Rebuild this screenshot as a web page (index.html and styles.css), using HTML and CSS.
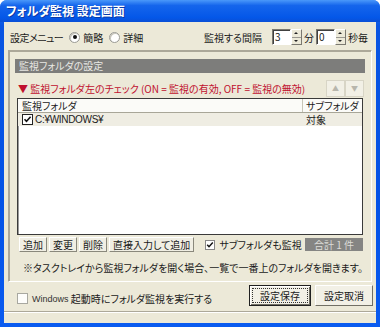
FILE: index.html
```html
<!DOCTYPE html>
<html lang="ja">
<head>
<meta charset="utf-8">
<title>フォルダ監視 設定画面</title>
<link rel="stylesheet" href="styles.css">
</head>
<body>
<div class="window">
    <div class="titlebar">フォルダ監視 設定画面</div>
    <div class="client">
        <div class="toprow">
            <div class="menu">
                <span>設定メニュー</span>
                <span class="radio on"></span><span>簡略</span>
                <span class="radio"></span><span>詳細</span>
            </div>
            <div class="interval">
                <span>監視する間隔</span>
                <span class="spin"><span class="field">3</span><span class="spinbtn"><i class="up"></i><i class="down"></i></span></span>
                <span>分</span>
                <span class="spin"><span class="field">0</span><span class="spinbtn"><i class="up"></i><i class="down"></i></span></span>
                <span>秒毎</span>
            </div>
        </div>

        <div class="panel">
            <div class="heading">監視フォルダの設定</div>
            <div class="hintrow">
                <span class="hint">▼ 監視フォルダ左のチェック (ON = 監視の有効, OFF = 監視の無効)</span>
                <span class="arrows"><span class="arrow">▲</span><span class="arrow">▼</span></span>
            </div>
            <div class="list">
                <div class="list-head">
                    <span class="col-name">監視フォルダ</span>
                    <span class="col-sub">サブフォルダ</span>
                </div>
                <div class="list-row">
                    <span class="col-name">
                        <svg class="tick" width="11" height="11" viewBox="0 0 11 11">
                            <rect x="0.5" y="0.5" width="10" height="10" fill="#fff" stroke="#222"/>
                            <path d="M2.5 5.2 L4.5 7.3 L8.6 2.8" fill="none" stroke="#111" stroke-width="1.6"/>
                        </svg><span class="path">C:¥WINDOWS¥</span>
                    </span>
                    <span class="col-sub">対象</span>
                </div>
            </div>
            <div class="actions">
                <span class="tool">追加</span>
                <span class="tool">変更</span>
                <span class="tool">削除</span>
                <span class="tool">直接入力して追加</span>
                <span class="check sub">
                    <svg width="10" height="10" viewBox="0 0 10 10">
                        <rect x="0.5" y="0.5" width="9" height="9" fill="#fff" stroke="#888"/>
                        <path d="M2.2 4.8 L4 6.7 L7.8 2.6" fill="none" stroke="#111" stroke-width="1.5"/>
                    </svg>サブフォルダも監視
                </span>
                <span class="total">合計 1 件</span>
            </div>
            <p class="note">※タスクトレイから監視フォルダを開く場合、一覧で一番上のフォルダを開きます。</p>
        </div>

        <div class="footer">
            <span class="check">
                <svg width="11" height="11" viewBox="0 0 11 11">
                    <rect x="0.5" y="0.5" width="10" height="10" fill="#fdfdfb" stroke="#a8a8a0"/>
                </svg><span class="latin">Windows</span>&nbsp;起動時にフォルダ監視を実行する
            </span>
            <div class="buttons">
                <span class="btn default"><span class="focus">設定保存</span></span>
                <span class="btn">設定取消</span>
            </div>
        </div>
        <div class="rule"></div>
    </div>
</div>
</body>
</html>
```

FILE: styles.css
```css
body
{
    margin: 0;
    background: #fff;
    font-family: "Noto Sans CJK JP", "Noto Sans", sans-serif;
    font-size: 10px;
    font-feature-settings: "palt";
    color: #1a1a1a;
    white-space: nowrap;
}
.window
{
    width: 380px;
    height: 327px;
    display: flex;
    flex-direction: column;
    background: linear-gradient(#2a7df6, #0a55e2 8%, #0352e6 60%, #0a5bf0);
    border-radius: 7px 7px 0 0;
}
.titlebar
{
    height: 22px;
    line-height: 22px;
    padding-left: 6px;
    color: #fff;
    font-weight: bold;
    font-size: 12px;
    text-shadow: 1px 1px 0 #0a3aa8;
    background: linear-gradient(#4a98fa, #1565ec 25%, #0457e8 80%, #0a4fd6);
    border-radius: 7px 7px 0 0;
}
.client
{
    flex: 1;
    margin: 0 4px 4px 4px;
    background: #ece9d8;
    display: flex;
    flex-direction: column;
}

/* top row */
.toprow
{
    display: flex;
    justify-content: space-between;
    align-items: center;
    height: 16px;
    margin-top: 7px;
    padding: 0 8px 0 6px;
}
.menu, .interval
{
    display: flex;
    align-items: center;
}
.menu > span:first-child
{
    letter-spacing: -0.5px;
}
.radio
{
    width: 9px;
    height: 9px;
    border-radius: 50%;
    background: #fff;
    border: 1px solid #9a9a94;
    box-shadow: inset 1px 1px 0 #c8c6bc;
    margin: 0 3px 0 6px;
    position: relative;
}
.radio.on::after
{
    content: "";
    position: absolute;
    left: 2.5px;
    top: 2.5px;
    width: 4px;
    height: 4px;
    border-radius: 50%;
    background: #111;
}
.interval > span:first-child
{
    margin-right: 8px;
}
.spin
{
    display: flex;
    height: 16px;
    margin: 0 2px;
}
.field
{
    width: 15px;
    background: #fff;
    border: 1px solid;
    border-color: #7a7870 #fff #fff #7a7870;
    box-shadow: inset 1px 1px 0 #404040;
    padding-left: 2px;
    line-height: 14px;
}
.spinbtn
{
    width: 9px;
    display: flex;
    flex-direction: column;
    background: #ece9d8;
    border: 1px solid;
    border-color: #fff #7a7870 #7a7870 #fff;
}
.spinbtn i
{
    flex: 1;
    position: relative;
}
.spinbtn i + i
{
    border-top: 1px solid #9a9890;
}
.spinbtn i::after
{
    content: "";
    position: absolute;
    left: 2px;
    top: 2px;
    border-left: 2px solid transparent;
    border-right: 2px solid transparent;
}
.spinbtn .up::after
{
    border-bottom: 2px solid #222;
}
.spinbtn .down::after
{
    top: 2px;
    border-top: 2px solid #222;
}

/* panel */
.panel
{
    height: 222px;
    margin: 5px 4px 0 4px;
    padding: 8px 6px 0 6px;
    border: 1px solid;
    border-color: #aca899 #fff #fff #aca899;
    box-shadow: 1px 1px 0 #aca899 inset;
}
.heading
{
    height: 14px;
    line-height: 14px;
    padding-left: 4px;
    background: #7d7d7b;
    color: #e8e8e4;
}
.hintrow
{
    display: flex;
    justify-content: space-between;
    align-items: center;
    height: 16px;
    margin-top: 7px;
    padding: 0 1px 0 3px;
}
.hint
{
    color: #c0102e;
}
.arrows
{
    display: flex;
}
.arrow
{
    width: 17px;
    height: 15px;
    line-height: 15px;
    text-align: center;
    font-size: 7px;
    color: #b8b6ac;
    border: 1px solid #d8d5c6;
    background: #f2f0e6;
}
.list
{
    height: 135px;
    margin: 2px 2px 0 2px;
    background: #fff;
    border: 1px solid #3a3a3a;
    box-shadow: inset 1px 1px 0 #9a9a9a;
}
.list-head, .list-row
{
    display: flex;
    height: 13px;
    line-height: 13px;
}
.list-head
{
    border-bottom: 1px solid #a8a698;
    background: #fbfbf8;
}
.list-row
{
    background: #efede3;
}
.col-name
{
    flex: 1;
    display: flex;
    align-items: center;
    padding-left: 4px;
}
.col-sub
{
    width: 56px;
    padding-left: 3px;
}
.list-head .col-sub
{
    border-left: 1px solid #c8c6b8;
}
.tick
{
    margin-right: 2px;
}
.path
{
    font-family: "Liberation Sans", sans-serif;
    font-size: 10px;
    letter-spacing: -0.3px;
}
.actions
{
    display: flex;
    align-items: center;
    height: 15px;
    margin: 2px 2px 0 4px;
}
.tool
{
    height: 13px;
    line-height: 13px;
    padding: 0 3px;
    margin-right: 2px;
    background: #f0eee3;
    border: 1px solid;
    border-color: #fff #8a887c #8a887c #fff;
}
.check
{
    display: flex;
    align-items: center;
}
.check svg
{
    margin-right: 4px;
}
.check.sub
{
    margin-left: 9px;
}
.total
{
    margin-left: auto;
    width: 58px;
    height: 13px;
    line-height: 13px;
    text-align: center;
    background: #858583;
    color: #dcdcd8;
}
.note
{
    margin: 8px 0 0 8px;
}

/* footer */
.footer
{
    display: flex;
    justify-content: space-between;
    align-items: center;
    height: 21px;
    margin-top: 3px;
    padding: 0 0 0 13px;
}
.footer .check
{
    margin-top: 6px;
}
.latin
{
    font-family: "Liberation Sans", sans-serif;
    font-size: 9px;
    color: #333;
}
.buttons
{
    display: flex;
    gap: 4px;
    padding-right: 3px;
}
.btn
{
    width: 56px;
    height: 19px;
    line-height: 19px;
    text-align: center;
    background: #f2f0e6;
    border: 1px solid;
    border-color: #fff #716f64 #716f64 #fff;
}
.btn.default
{
    width: 60px;
    border-color: #202020;
    box-shadow: inset 1px 1px 0 #fff, inset -1px -1px 0 #716f64;
    display: flex;
    align-items: center;
    justify-content: center;
}
.focus
{
    outline: 1px dotted #333;
    padding: 0 7px;
    line-height: 13px;
}
.rule
{
    margin-top: 5px;
    border-top: 1px solid #aca899;
    border-bottom: 1px solid #fff;
}
```
